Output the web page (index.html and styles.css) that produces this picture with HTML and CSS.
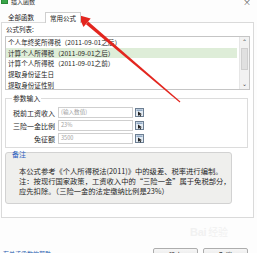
FILE: index.html
```html
<!DOCTYPE html>
<html lang="zh-CN">
<head>
<meta charset="utf-8">
<title>插入函数</title>
<link rel="stylesheet" href="styles.css">
</head>
<body>
<div class="dlg">
  <div class="titlebar">
    <span class="appicon"></span>
    <span class="title">插入函数</span>
    <span class="close">×</span>
  </div>
  <div class="tabs">
    <span class="tab">全部函数</span>
    <span class="tab active">常用公式</span>
  </div>
  <div class="panel">
    <div class="lbl">公式列表:</div>
    <div class="listbox">
      <ul class="items">
        <li>个人年终奖所得税（2011-09-01之后）</li>
        <li class="sel">计算个人所得税（2011-09-01之后）</li>
        <li>计算个人所得税（2011-09-01之前）</li>
        <li>提取身份证生日</li>
        <li>提取身份证性别</li>
      </ul>
      <div class="scroll">
        <span class="sbtn">&#8963;</span>
        <div class="track"><span class="thumb"></span></div>
        <span class="sbtn">&#8964;</span>
      </div>
    </div>
    <fieldset class="params">
      <legend>参数输入</legend>
      <div class="grid">
        <span class="plabel">税前工资收入</span>
        <span class="input">(输入数值)</span>
        <svg class="pick" viewBox="0 0 9 9" width="9" height="9"><rect x="0.5" y="0.5" width="8" height="8" fill="#e3ebf3" stroke="#6d7f93"/><rect x="1.5" y="1.5" width="6" height="1.5" fill="#8fa8c4"/><path d="M3 3.5 L3 8 L4.3 6.8 L5.3 8.5 L6.2 8 L5.3 6.4 L7 6.2 Z" fill="#222"/></svg>
        <span class="plabel">三险一金比例</span>
        <span class="input">23%</span>
        <svg class="pick" viewBox="0 0 9 9" width="9" height="9"><rect x="0.5" y="0.5" width="8" height="8" fill="#e3ebf3" stroke="#6d7f93"/><rect x="1.5" y="1.5" width="6" height="1.5" fill="#8fa8c4"/><path d="M3 3.5 L3 8 L4.3 6.8 L5.3 8.5 L6.2 8 L5.3 6.4 L7 6.2 Z" fill="#222"/></svg>
        <span class="plabel">免征额</span>
        <span class="input">3500</span>
        <svg class="pick" viewBox="0 0 9 9" width="9" height="9"><rect x="0.5" y="0.5" width="8" height="8" fill="#e3ebf3" stroke="#6d7f93"/><rect x="1.5" y="1.5" width="6" height="1.5" fill="#8fa8c4"/><path d="M3 3.5 L3 8 L4.3 6.8 L5.3 8.5 L6.2 8 L5.3 6.4 L7 6.2 Z" fill="#222"/></svg>
      </div>
    </fieldset>
    <div class="note">
      <div class="note-title">备注</div>
      <p>本公式参考《个人所得税法(2011)》中的级差、税率进行编制。</p>
      <p>注：按现行国家政策，工资收入中的“三险一金”属于免税部分，</p>
      <p>应先扣除。（三险一金的法定缴纳比例是23%）</p>
    </div>
  </div>
  <div class="footer">
    <a class="help" href="#">有关该函数的帮助</a>
    <div class="btns">
      <button class="btn">确定</button>
      <button class="btn">取消</button>
    </div>
  </div>
  <div class="watermark">Bai<span>经验</span></div>
  <svg class="arrow" viewBox="0 0 257 253" width="257" height="253">
    <polygon points="86,24.2 88.2,21.6 180.4,101.6 179.7,102.5" fill="#e3261f"/>
    <polygon points="78,15 90.7,18.6 83.5,27" fill="#e3261f"/>
  </svg>
</div>
</body>
</html>
```
FILE: styles.css
```css
* { box-sizing: border-box; }
html, body { margin: 0; padding: 0; }
body {
  width: 257px;
  height: 253px;
  overflow: hidden;
  background: #fdfdfd;
  font-family: "Noto Sans CJK SC", "Noto Sans", sans-serif;
  color: #1e1e1e;
}
.dlg {
  position: relative;
  width: 257px;
  height: 253px;
  overflow: hidden;
}
.titlebar {
  height: 10px;
  display: flex;
  align-items: flex-start;
  overflow: hidden;
  padding: 0 6px 0 1px;
}
.appicon {
  width: 7px;
  height: 7px;
  margin-top: -3px;
  background: #3aa64a;
  border: 1px solid #2a8a38;
}
.title {
  font-size: 6px;
  line-height: 9px;
  margin-top: -3px;
  margin-left: 3px;
  color: #333;
  flex: 1;
}
.close {
  font-size: 8px;
  line-height: 8px;
  margin-top: -2px;
  color: #555;
}
.tabs {
  height: 12px;
  padding: 2px 0 0 3px;
  display: flex;
  align-items: stretch;
  font-size: 6.5px;
}
.tab {
  padding: 0 5px;
  line-height: 10px;
  color: #222;
}
.tab.active {
  margin-left: 6px;
  padding: 0 4px;
  background: #fff;
  border: 1px solid #cfcfcf;
  border-bottom: none;
  position: relative;
  z-index: 1;
  margin-bottom: -1px;
  line-height: 10px;
}
.panel {
  margin: 0 3px 0 1px;
  border: 1px solid #dadada;
  background: #fff;
  padding: 2px 3px 11px 3px;
  height: 196px;
}
.lbl {
  font-size: 6.5px;
  line-height: 8px;
  padding-left: 1px;
}
.listbox {
  margin-top: 3px;
  height: 54px;
  border: 1px solid #c5c5c5;
  display: flex;
  overflow: hidden;
  background: #fff;
}
.items {
  list-style: none;
  margin: 0;
  padding: 0;
  flex: 1;
  overflow: hidden;
}
.items li {
  height: 10.7px;
  line-height: 10.7px;
  font-size: 6.6px;
  padding-left: 2px;
  white-space: nowrap;
  margin-right: 2px;
}
.items li.sel {
  background: #deedd8;
}
.scroll {
  width: 10px;
  display: flex;
  flex-direction: column;
  background: #f2f2f2;
  border-left: 1px solid #e6e6e6;
}
.sbtn {
  height: 10px;
  font-size: 6px;
  line-height: 10px;
  text-align: center;
  color: #444;
}
.track {
  flex: 1;
  padding: 1px 1px 0;
}
.thumb {
  display: block;
  height: 22px;
  background: #e0e0e0;
  border: 1px solid #cfcfcf;
}
.params {
  margin: 4px 2px 0 0;
  padding: 4px 0 2px 0;
  border: 1px solid #dcdcdc;
  min-width: 0;
}
.params legend {
  font-size: 6.8px;
  line-height: 8px;
  padding: 0 1px;
  margin-left: 6px;
}
.grid {
  display: grid;
  grid-template-columns: 49px 75px 9px;
  grid-auto-rows: 13px;
  column-gap: 3px;
  align-items: center;
}
.grid .pick { margin-left: -1px; }
.plabel {
  font-size: 7px;
  text-align: right;
  white-space: nowrap;
}
.input {
  height: 11px;
  border: 1px solid #cfcfcf;
  background: #fff;
  font-size: 5.6px;
  line-height: 9px;
  padding-left: 2px;
  color: #a0a0a0;
  white-space: nowrap;
}
.note {
  margin-top: 4px;
  width: 227px;
  border: 1px solid #d2d2d2;
  border-radius: 3px;
  background: #efefed;
  padding: 0 0 7px 13px;
  font-size: 7.3px;
}
.note-title {
  margin: -3px 0 0 -7px;
  line-height: 8px;
  font-size: 7px;
  color: #2d63c0;
}
.note p {
  margin: 0;
  line-height: 10px;
  white-space: nowrap;
}
.note-title + p { margin-top: 8px; }
.footer {
  display: flex;
  justify-content: space-between;
  align-items: flex-start;
  padding: 30px 9px 0 3px;
}
.help {
  font-size: 6px;
  line-height: 9px;
  margin-top: 1px;
  color: #2a5db0;
  text-decoration: none;
}
.btns {
  display: flex;
  gap: 5px;
}
.btn {
  width: 45px;
  height: 14px;
  padding: 0;
  border: 1px solid #adadad;
  border-radius: 2px;
  background: linear-gradient(#f6f6f6, #e2e2e2);
  font-family: inherit;
  font-size: 6.5px;
  line-height: 11px;
  color: #222;
}
.watermark {
  position: absolute;
  left: 190px;
  top: 224px;
  font-family: "Liberation Sans", sans-serif;
  font-size: 11px;
  font-weight: bold;
  color: #f1f1f1;
  letter-spacing: -0.3px;
}
.watermark span {
  font-family: "Noto Sans CJK SC", sans-serif;
  font-weight: normal;
  font-size: 10px;
  margin-left: 2px;
}
.arrow {
  position: absolute;
  left: 0;
  top: 0;
  pointer-events: none;
}
```
